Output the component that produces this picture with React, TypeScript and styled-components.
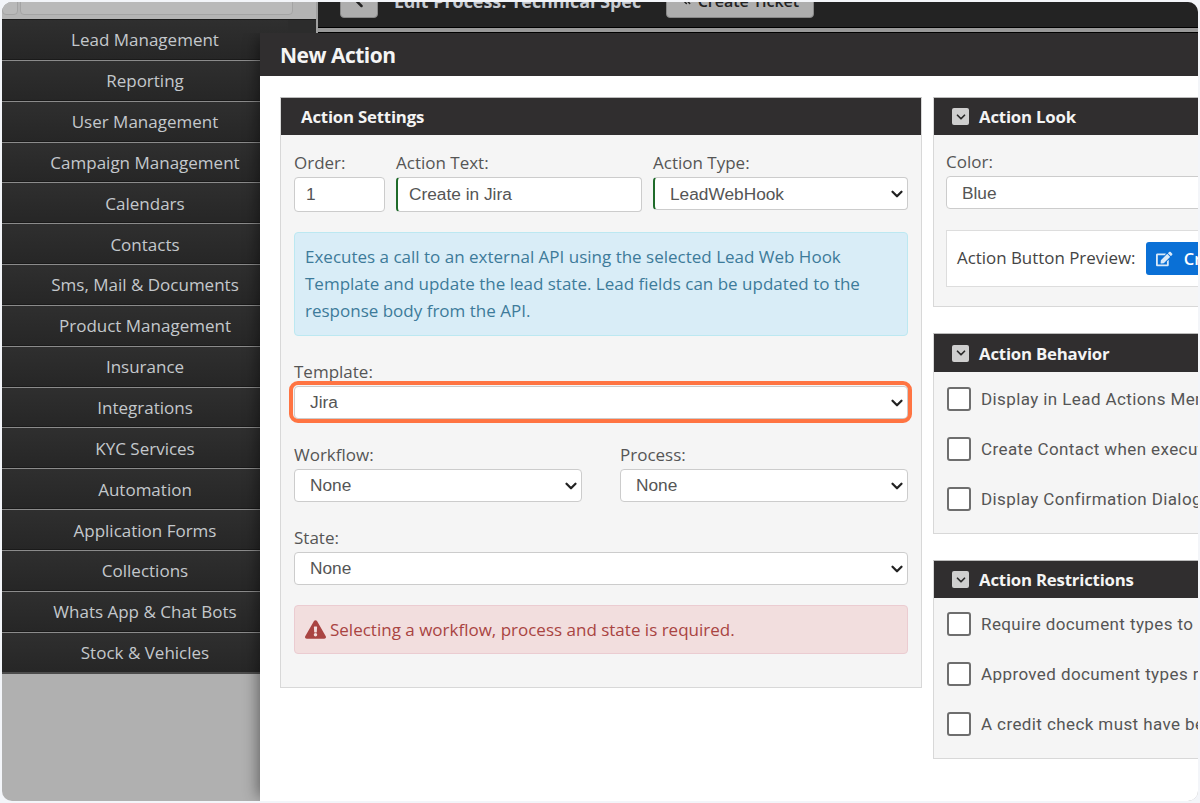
import React from "react";
import styled, { createGlobalStyle } from "styled-components";
import { ChevronDown, ChevronLeft, ChevronsLeft } from "lucide-react";
import { FaEdit, FaExclamationTriangle } from "react-icons/fa";

const Global = createGlobalStyle`
  html, body { margin: 0; padding: 0; background: #f3f5f9; }
  * { box-sizing: border-box; }
`;

const Page = styled.div`
  width: 1200px;
  height: 803px;
  padding: 2px;
  overflow: hidden;
  font-family: "Open Sans", "Liberation Sans", sans-serif;
`;

const Screen = styled.div`
  position: relative;
  width: 1196px;
  height: 799px;
  border-radius: 10px;
  overflow: hidden;
  display: flex;
  background: #b0b0b0;
`;

const LeftColumn = styled.div`
  width: 314px;
  flex: none;
  display: flex;
  flex-direction: column;
`;

const SearchStrip = styled.div`
  height: 17px;
  flex: none;
  display: flex;
  align-items: flex-end;
  gap: 2px;
  padding: 0 23px 4px 0;
  background: #b4b4b4;
`;

const StripBox = styled.div<{ $grow?: boolean }>`
  height: 24px;
  margin-top: -10px;
  flex: ${(p) => (p.$grow ? "1" : "none")};
  width: ${(p) => (p.$grow ? "auto" : "16px")};
  background: #b9b9b9;
  border: 1px solid #a4a4a4;
  border-radius: 4px;
`;

const Nav = styled.nav`
  width: 286px;
`;

const NavRows = styled.div`
  display: flex;
  border-top: 1px solid #1c1c1c;
`;

const NavGutter = styled.div`
  flex: 1;
  height: 13px;
  background: #2c2c2c;
`;

const NavItem = styled.a`
  display: flex;
  height: 40.85px;
  align-items: center;
  justify-content: center;
  background: linear-gradient(#2f2f2f, #262626);
  border-bottom: 1px solid #8b8b8b;
  box-shadow: inset 0 -1px 0 #1a1a1a;
  color: #c4c8cc;
  font-size: 17px;
  &:last-child {
    border-bottom: 2px solid #4c4c4c;
    box-shadow: none;
  }
`;

const MainColumn = styled.div`
  flex: 1;
  min-width: 0;
`;

const TopBar = styled.header`
  height: 31px;
  display: flex;
  align-items: flex-end;
  gap: 16px;
  padding: 0 0 15px 22px;
  overflow: hidden;
  background: #232323;
  border-left: 2px solid #a0a0a0;
  box-shadow: inset 0 -1px 0 #000, inset 0 -5px 0 #999, inset 0 -6px 0 #000;
`;

const TopButton = styled.button`
  height: 34px;
  flex: none;
  display: inline-flex;
  align-items: center;
  justify-content: center;
  gap: 5px;
  margin: 0;
  padding: 0 14px;
  border: 1px solid #888;
  border-radius: 4px;
  background: #aeaeae;
  color: #222;
  white-space: nowrap;
  font: 600 16px "Open Sans", sans-serif;
`;

const BackButton = styled(TopButton)`
  width: 38px;
  padding: 0;
`;

const TicketButton = styled(TopButton)`
  width: 148px;
  margin-left: 9px;
`;

const ProcessTitle = styled.div`
  flex: none;
  height: 34px;
  line-height: 34px;
  color: #c6cad0;
  font-size: 17.9px;
  font-weight: 700;
`;

const Modal = styled.section`
  position: absolute;
  left: 258px;
  top: 31px;
  right: 0;
  bottom: 0;
  background: #fff;
  box-shadow: -6px 0 14px -4px rgba(0, 0, 0, 0.45);
  clip-path: inset(0 0 0 -30px);
  overflow: hidden;
`;

const ModalHeader = styled.div`
  height: 43px;
  padding: 1px 0 0 20px;
  display: flex;
  align-items: center;
  background: #302e2f;
  color: #f4f4f4;
  font-size: 21px;
  font-weight: 700;
  letter-spacing: -0.5px;
`;

const ModalBody = styled.div`
  display: flex;
  align-items: flex-start;
  gap: 11px;
  padding: 21px 0 0 20px;
`;

const LeftPane = styled.div`
  width: 642px;
  flex: none;
`;

const RightPane = styled.div`
  width: 320px;
  flex: none;
  display: flex;
  flex-direction: column;
  gap: 26px;
`;

const Panel = styled.div`
  border: 1px solid #d8d8d8;
  border-top-color: #bbb;
  background: #f5f5f5;
`;

const PanelHeader = styled.div<{ $h?: number }>`
  height: ${(p) => p.$h ?? 37}px;
  display: flex;
  align-items: center;
  gap: 10px;
  padding-left: 20px;
  background: #302e2f;
  color: #f4f4f4;
  font-size: 16.8px;
  font-weight: 700;
  letter-spacing: -0.2px;
`;

const Collapse = styled.span`
  width: 17px;
  height: 17px;
  margin-left: -2px;
  display: inline-flex;
  align-items: center;
  justify-content: center;
  border-radius: 2px;
  background: #cfcfcf;
  color: #2a2a2a;
`;

const SettingsBody = styled.div`
  padding: 18px 13px 33px;
  display: flex;
  flex-direction: column;
`;

const Row = styled.div<{ $gap?: number; $top?: number }>`
  display: flex;
  gap: ${(p) => p.$gap ?? 11}px;
  margin-top: ${(p) => p.$top ?? 0}px;
`;

const Field = styled.label<{ $w?: number }>`
  display: block;
  flex: ${(p) => (p.$w ? "none" : "1")};
  width: ${(p) => (p.$w ? `${p.$w}px` : "auto")};
  min-width: 0;
  color: #555;
  font-size: 17px;
  line-height: 20px;
`;

const controlCss = `
  display: block;
  width: 100%;
  background: #fff;
  border: 1px solid #ccc;
  border-radius: 4px;
  color: #555;
  font-family: "Liberation Sans", Arial, sans-serif;
  font-size: 17.3px;
  outline: none;
`;

const Input = styled.input<{ $accent?: boolean }>`
  ${controlCss}
  height: 35px;
  margin-top: 4px;
  padding: 0 11px;
  ${(p) => (p.$accent ? "border-left: 2px solid #1f6b2a;" : "")}
`;

const SelectWrap = styled.div`
  position: relative;
  margin-top: 4px;
  color: #222;
  svg {
    position: absolute;
    top: 8px;
    right: 2px;
    pointer-events: none;
  }
`;

const NativeSelect = styled.select<{ $accent?: boolean; $lift: number }>`
  ${controlCss}
  height: 33px;
  padding: 0 24px ${(p) => p.$lift}px 15px;
  appearance: none;
  ${(p) => (p.$accent ? "border-left: 2px solid #1f6b2a;" : "")}
`;

const HighlightRing = styled.div`
  position: absolute;
  left: -5px;
  right: -4px;
  top: -5px;
  bottom: -4px;
  border: 4px solid #ff7442;
  border-radius: 9px;
  pointer-events: none;
`;

const InfoAlert = styled.div`
  margin-top: 20px;
  padding: 10px 10px 11px;
  background: #d9edf7;
  border: 1px solid #bce8f1;
  border-radius: 4px;
  color: #3d7b9a;
  font-size: 17px;
  line-height: 27px;
`;

const DangerAlert = styled.div`
  margin-top: 20px;
  height: 49px;
  padding: 0 10px;
  display: flex;
  align-items: center;
  gap: 4px;
  background: #f2dede;
  border: 1px solid #ebccd1;
  border-radius: 4px;
  color: #a94442;
  font-size: 17px;
`;

const LookBody = styled.div`
  padding: 17px 12px 20px;
  height: 171px;
`;

const PreviewBox = styled.div`
  margin-top: 21px;
  height: 57px;
  display: flex;
  align-items: center;
  gap: 11px;
  padding-left: 10px;
  background: #fff;
  border: 1px solid #ddd;
  white-space: nowrap;
  color: #444;
  font-size: 16.9px;
`;

const PreviewLabel = styled.span`
  margin-top: -3px;
`;

const PreviewButton = styled.span`
  flex: none;
  width: 140px;
  height: 33px;
  display: inline-flex;
  align-items: center;
  gap: 11px;
  padding-left: 10px;
  border-radius: 3px;
  background: #0a70d6;
  color: #fff;
  font-size: 16.5px;
  font-weight: 600;
  svg { opacity: 0.85; }
`;

const CheckList = styled.div<{ $start: number; $end: number }>`
  padding: ${(p) => p.$start}px 13px ${(p) => p.$end}px;
  display: flex;
  flex-direction: column;
`;

const CheckRow = styled.label`
  height: 50px;
  flex: none;
  display: flex;
  align-items: center;
  gap: 10px;
  white-space: nowrap;
  color: #555;
  font-family: Roboto, sans-serif;
  font-size: 17px;
  letter-spacing: 0.4px;
`;

const CheckBox = styled.span`
  width: 24px;
  height: 24px;
  flex: none;
  background: #fff;
  border: 2px solid #6e6e6e;
  border-radius: 3px;
`;

const navItems = [
  "Lead Management",
  "Reporting",
  "User Management",
  "Campaign Management",
  "Calendars",
  "Contacts",
  "Sms, Mail & Documents",
  "Product Management",
  "Insurance",
  "Integrations",
  "KYC Services",
  "Automation",
  "Application Forms",
  "Collections",
  "Whats App & Chat Bots",
  "Stock & Vehicles",
];

const behavior = [
  "Display in Lead Actions Menu",
  "Create Contact when executing action",
  "Display Confirmation Dialog",
];

const restrictions = [
  "Require document types to be uploaded",
  "Approved document types required",
  "A credit check must have been done",
];

function CardTitle({ children, h = 38 }: { children: string; h?: number }) {
  return (
    <PanelHeader $h={h}>
      <Collapse>
        <ChevronDown size={14} strokeWidth={3} />
      </Collapse>
      {children}
    </PanelHeader>
  );
}

function Checks({ items, start, end }: { items: string[]; start: number; end: number }) {
  return (
    <CheckList $start={start} $end={end}>
      {items.map((t) => (
        <CheckRow key={t}>
          <CheckBox />
          {t}
        </CheckRow>
      ))}
    </CheckList>
  );
}

function Select({
  value,
  accent,
  ring,
  lift = 2,
}: {
  value: string;
  accent?: boolean;
  ring?: boolean;
  lift?: number;
}) {
  return (
    <SelectWrap>
      <NativeSelect $accent={accent} $lift={lift} defaultValue={value}>
        <option>{value}</option>
      </NativeSelect>
      <ChevronDown size={18} strokeWidth={3} />
      {ring && <HighlightRing />}
    </SelectWrap>
  );
}

export default function App() {
  return (
    <Page>
      <Global />
      <Screen>
        <LeftColumn>
          <SearchStrip>
            <StripBox />
            <StripBox $grow />
          </SearchStrip>
          <NavRows>
            <Nav>
              {navItems.map((n) => (
                <NavItem key={n}>{n}</NavItem>
              ))}
            </Nav>
            <NavGutter />
          </NavRows>
        </LeftColumn>
        <MainColumn>
          <TopBar>
            <BackButton>
              <ChevronLeft size={20} strokeWidth={3} />
            </BackButton>
            <ProcessTitle>Edit Process: Technical Spec</ProcessTitle>
            <TicketButton>
              <ChevronsLeft size={18} strokeWidth={3} />
              Create Ticket
            </TicketButton>
          </TopBar>
        </MainColumn>
        <Modal>
          <ModalHeader>New Action</ModalHeader>
          <ModalBody>
            <LeftPane>
              <Panel>
                <PanelHeader>Action Settings</PanelHeader>
                <SettingsBody>
                  <Row>
                    <Field $w={91}>
                      Order:
                      <Input defaultValue="1" />
                    </Field>
                    <Field $w={246}>
                      Action Text:
                      <Input $accent defaultValue="Create in Jira" />
                    </Field>
                    <Field>
                      Action Type:
                      <Select accent lift={0} value="LeadWebHook" />
                    </Field>
                  </Row>
                  <InfoAlert>
                    Executes a call to an external API using the selected Lead Web Hook Template and update the lead state. Lead fields can be updated to the response body from the API.
                  </InfoAlert>
                  <Row $top={26}>
                    <Field>
                      Template:
                      <Select ring value="Jira" />
                    </Field>
                  </Row>
                  <Row $top={26} $gap={38}>
                    <Field>
                      Workflow:
                      <Select value="None" />
                    </Field>
                    <Field>
                      Process:
                      <Select value="None" />
                    </Field>
                  </Row>
                  <Row $top={26}>
                    <Field>
                      State:
                      <Select value="None" />
                    </Field>
                  </Row>
                  <DangerAlert>
                    <FaExclamationTriangle size={21} />
                    Selecting a workflow, process and state is required.
                  </DangerAlert>
                </SettingsBody>
              </Panel>
            </LeftPane>
            <RightPane>
              <Panel>
                <CardTitle h={37}>Action Look</CardTitle>
                <LookBody>
                  <Field>
                    Color:
                    <Select lift={0} value="Blue" />
                  </Field>
                  <PreviewBox>
                    <PreviewLabel>Action Button Preview:</PreviewLabel>
                    <PreviewButton>
                      <FaEdit size={20} />
                      Create in Jira
                    </PreviewButton>
                  </PreviewBox>
                </LookBody>
              </Panel>
              <Panel>
                <CardTitle>Action Behavior</CardTitle>
                <Checks items={behavior} start={2} end={9} />
              </Panel>
              <Panel>
                <CardTitle h={37}>Action Restrictions</CardTitle>
                <Checks items={restrictions} start={1} end={9} />
              </Panel>
            </RightPane>
          </ModalBody>
        </Modal>
      </Screen>
    </Page>
  );
}
